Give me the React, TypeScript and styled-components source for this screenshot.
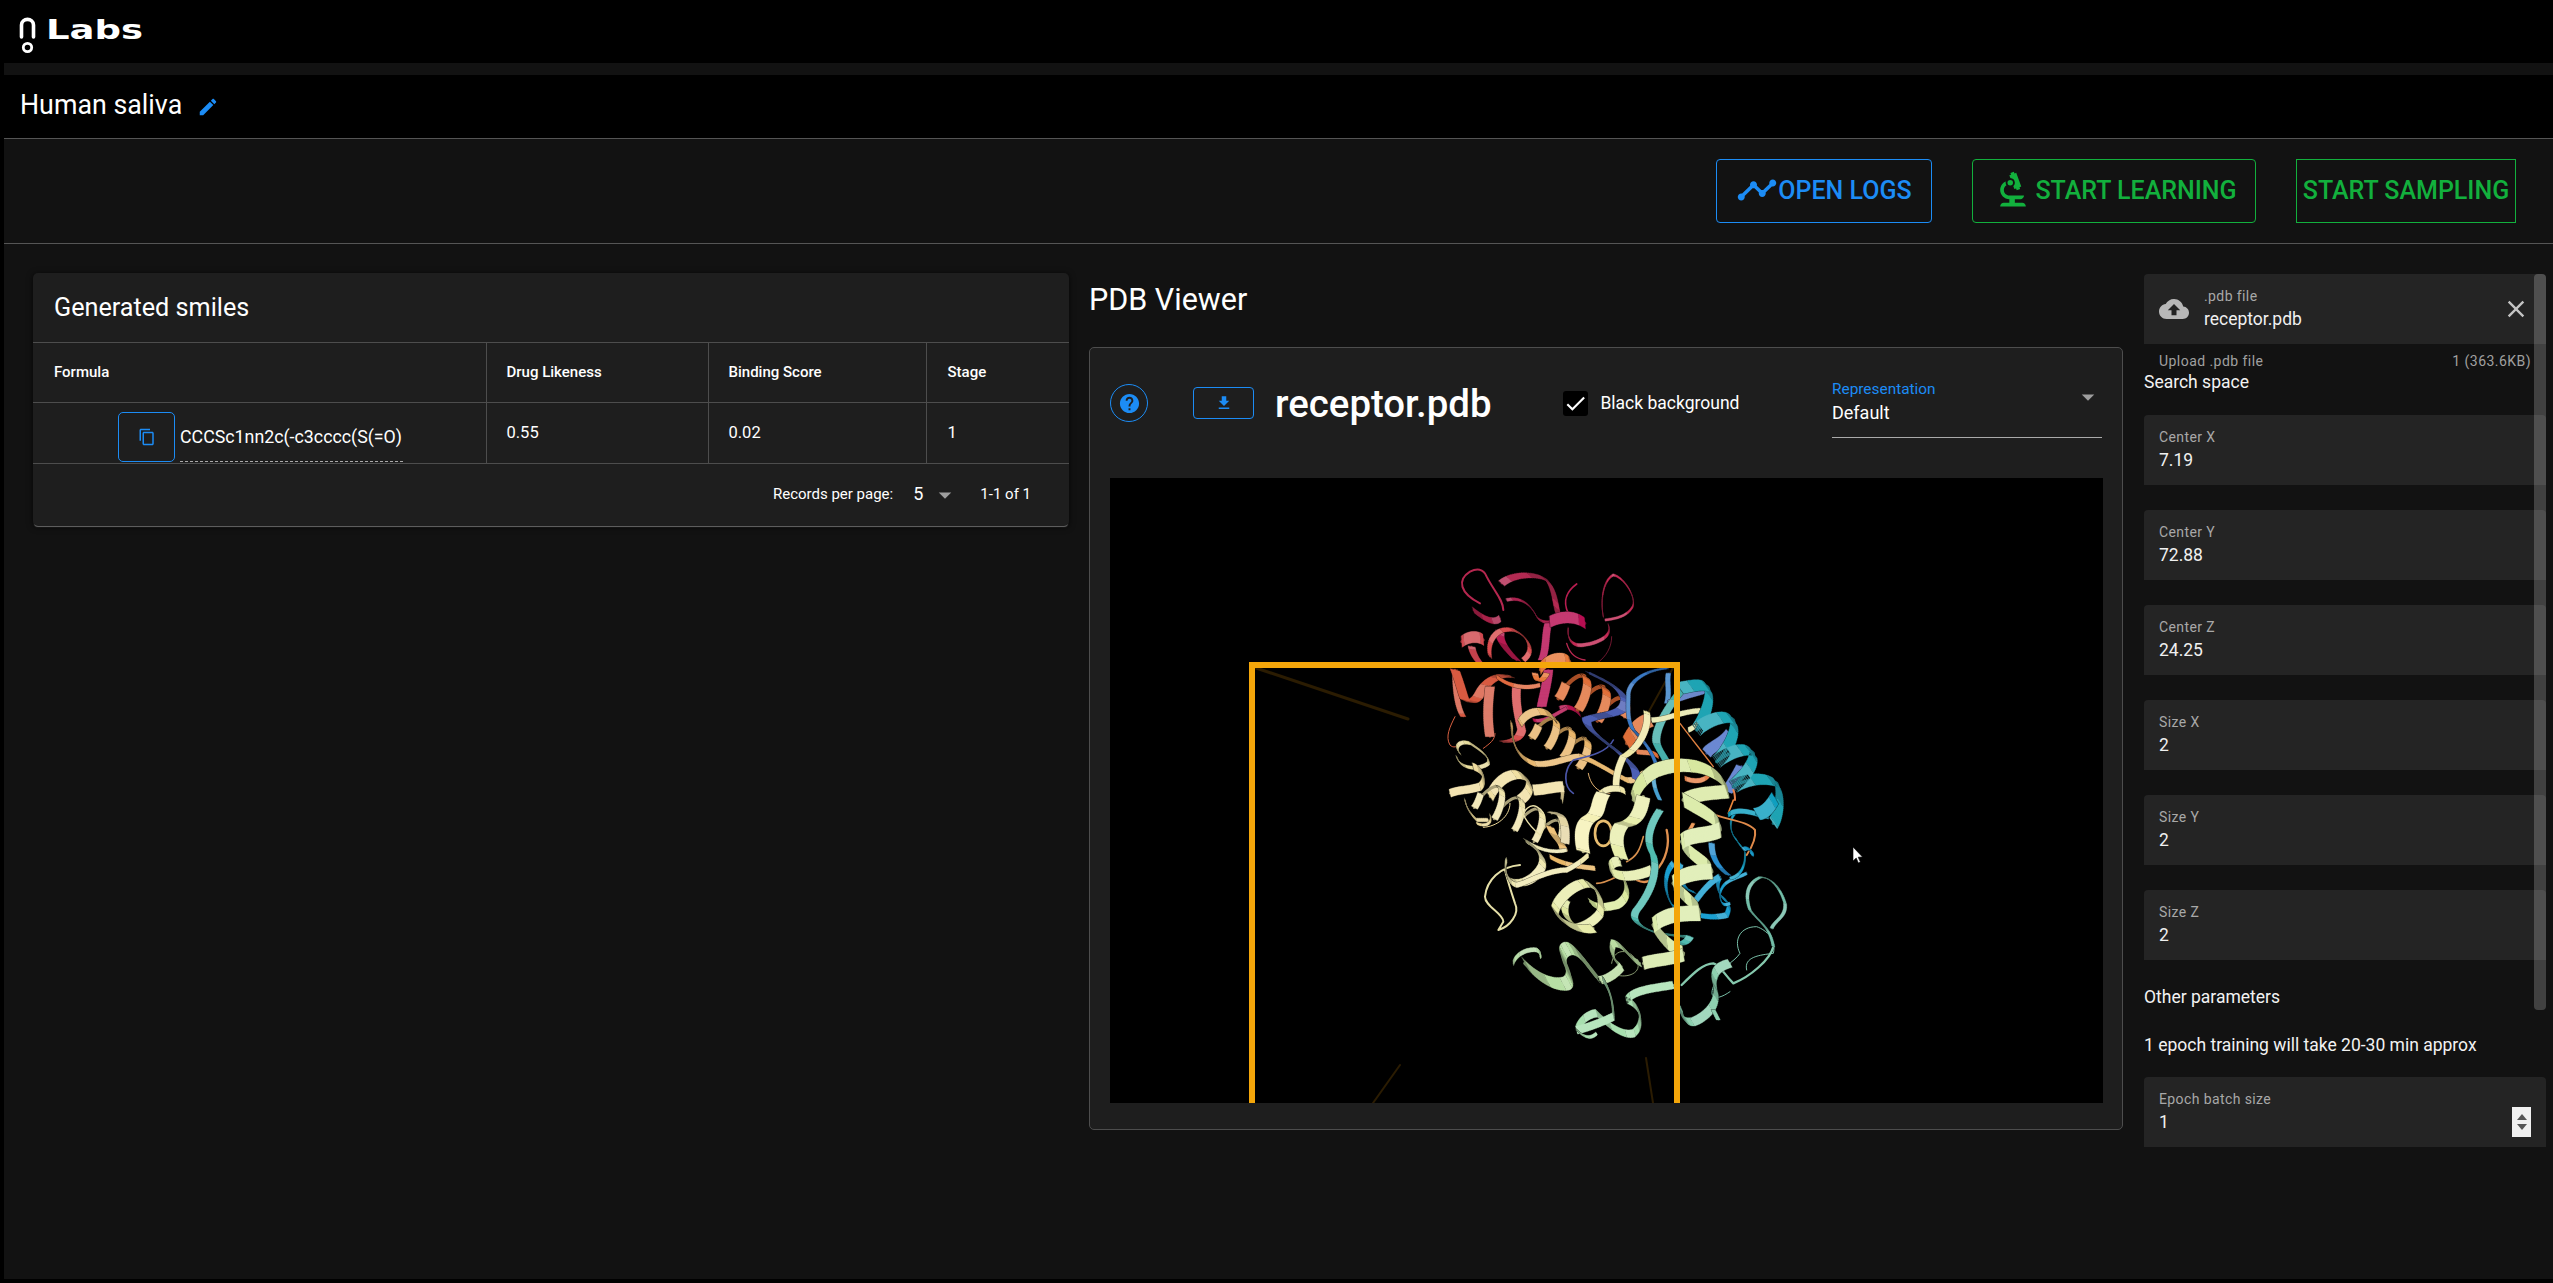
import React from "react";
import styled, { createGlobalStyle } from "styled-components";

const Global = createGlobalStyle`
  html, body { margin: 0; padding: 0; background: #000; }
  body { font-family: Roboto, "Liberation Sans", sans-serif; color: #fff; overflow: hidden; }
  * { box-sizing: border-box; }
`;

const BLUE = "#1c8cf5";
const GREEN = "#12b03d";
const LINE = "#4d4d4d";

const Page = styled.div`
  width: 2553px; height: 1283px; background: #000;
  display: flex; flex-direction: column;
`;
const TopBar = styled.header`
  height: 63px; flex: none; display: flex; align-items: flex-start; padding: 17px 0 0 18px; gap: 0;
`;
const LogoText = styled.span`
  display: inline-block; width: 92px; margin: 0 0 0 2px;
  font-family: "DejaVu Sans", sans-serif; font-size: 27px; line-height: 26px; font-weight: 700;
  transform: scaleX(1.37); transform-origin: left center; color: #fff;
`;
const Main = styled.main`
  flex: 1; margin: 0 0 4px 4px; background: #121212; display: flex; flex-direction: column; min-height: 0;
  padding-top: 12px;
`;
const TitleBar = styled.div`
  height: 64px; flex: none; background: #000; border-bottom: 1px solid #555;
  display: flex; align-items: center; padding: 0 0 4px 16px;
`;
const Title = styled.h1`
  margin: 0; font-size: 26.8px; line-height: 32px; font-weight: 400;
`;
const EditIcon = styled.svg`
  width: 22px; height: 22px; margin: 5px 0 0 15px; fill: ${BLUE};
`;
const Toolbar = styled.div`
  height: 105px; flex: none; border-bottom: 1px solid #555; display: flex; align-items: center;
  justify-content: flex-end; gap: 40px; padding: 0 37px 0 0;
`;
const ActionButton = styled.div<{ $color: string; $width: number; $radius: number }>`
  width: ${(p) => p.$width}px; height: 64px; display: flex; align-items: center; justify-content: center;
  border: 1px solid ${(p) => p.$color}; border-radius: ${(p) => p.$radius}px; color: ${(p) => p.$color};
  font-size: 25px; font-weight: 500; white-space: nowrap; padding-bottom: 2px;
`;
const ButtonIcon = styled.svg<{ $size: number }>`
  width: ${(p) => p.$size}px; height: ${(p) => p.$size}px; fill: currentColor; flex: none;
`;
const Columns = styled.div`
  flex: 1; display: flex; align-items: flex-start; padding: 29px 0 0 29px; min-height: 0;
`;
const TableCard = styled.section`
  width: 1036px; flex: none; background: #1e1e1e; border-radius: 5px;
  box-shadow: 0 2px 1px -1px #666, 0 1px 6px rgba(0,0,0,.7);
`;
const CardTitle = styled.h2`
  margin: 0; height: 70px; padding: 0 21px 0 21px; display: flex; align-items: center;
  font-size: 25.2px; font-weight: 400; border-bottom: 1px solid ${LINE};
`;
const Table = styled.table`
  width: 100%; border-collapse: collapse; table-layout: fixed;
`;
const Th = styled.th<{ $w: number }>`
  width: ${(p) => p.$w}px; height: 59px; padding: 0 0 0 20px; text-align: left; font-size: 15px; font-weight: 500;
  border-left: 1px solid ${LINE}; border-bottom: 1px solid ${LINE};
  &:first-child { border-left: 0; padding-left: 21px; }
  &:last-child { padding-left: 21px; }
`;
const Td = styled.td`
  height: 61px; padding: 0 0 0 20px; font-size: 16.5px; border-left: 1px solid ${LINE}; border-bottom: 1px solid ${LINE};
  &:first-child { border-left: 0; padding: 0 0 0 85px; }
  &:last-child { padding-left: 21px; }
`;
const FormulaCell = styled.div`
  display: flex; align-items: flex-end; height: 50px; margin-top: 9px; gap: 5px;
`;
const CopyButton = styled.div`
  width: 57px; height: 50px; flex: none; border: 1px solid ${BLUE}; border-radius: 5px;
  display: flex; align-items: center; justify-content: center;
`;
const CopyIcon = styled.svg`
  width: 18px; height: 18px; fill: ${BLUE};
`;
const Formula = styled.span`
  font-size: 17.8px; line-height: 50px; height: 50px; width: 223px; white-space: nowrap; border-bottom: 1px dashed #aaa; display: block;
`;
const Footer = styled.div`
  height: 62px; display: flex; align-items: center; justify-content: flex-end; padding: 0 38px 2px 0; font-size: 15px;
`;
const PerPage = styled.span`
  font-size: 18px; margin: 0 0 0 20px;
`;
const Caret = styled.svg<{ $m: string }>`
  width: 30px; height: 30px; fill: #9e9e9e; margin: ${(p) => p.$m}; flex: none;
`;
const Range = styled.span`
  margin-left: 20px;
`;
const ViewerColumn = styled.section`
  width: 1034px; flex: none; margin-left: 20px;
`;
const ViewerHeading = styled.h2`
  margin: 0; height: 74px; padding: 12px 0 0 0; font-size: 30.5px; line-height: 30px; font-weight: 400;
`;
const ViewerCard = styled.div`
  height: 783px; background: #1e1e1e; border: 1px solid ${LINE}; border-radius: 5px; padding: 0 20px;
`;
const ViewerControls = styled.div`
  height: 130px; display: flex; align-items: center; padding-bottom: 20px;
`;
const HelpRing = styled.div`
  width: 38px; height: 38px; flex: none; border: 1px solid ${BLUE}; border-radius: 50%;
  display: flex; align-items: center; justify-content: center;
`;
const HelpIcon = styled.svg`
  width: 23px; height: 23px; fill: ${BLUE};
`;
const DownloadButton = styled.div`
  width: 61px; height: 32px; flex: none; margin-left: 45px; border: 1px solid ${BLUE}; border-radius: 4px;
  display: flex; align-items: center; justify-content: center;
`;
const DownloadIcon = styled.svg`
  width: 18px; height: 18px; fill: ${BLUE};
`;
const FileName = styled.div`
  width: 289px; margin-left: 21px; font-size: 38.4px; font-weight: 500; white-space: nowrap;
`;
const CheckBox = styled.div`
  width: 25px; height: 25px; flex: none; background: #000; border-radius: 3px; display: flex; align-items: center; justify-content: center;
`;
const CheckIcon = styled.svg`
  width: 25px; height: 25px; fill: #fff;
`;
const CheckLabel = styled.span`
  width: 232px; margin-left: 12px; font-size: 17.5px; white-space: nowrap;
`;
const SelectBox = styled.div`
  width: 270px; height: 58px; flex: none; border-bottom: 1px solid #aaa; position: relative; margin-top: 12px;
`;
const SelectLabel = styled.div`
  font-size: 15.4px; line-height: 18px; color: ${BLUE};
`;
const SelectValue = styled.div`
  font-size: 18px; line-height: 24px; margin-top: 3px;
`;
const SelectCaret = styled(Caret)`
  position: absolute; right: -1px; top: 2px;
`;
const Viewer = styled.div`
  width: 993px; height: 625px; background: #000; overflow: hidden;
`;
const ViewerArt = styled.svg`
  display: block; width: 993px; height: 625px;
`;
const Side = styled.aside`
  width: 402px; height: 874px; flex: none; margin: 1px 0 0 21px; position: relative; overflow: hidden;
`;
const ScrollThumb = styled.div`
  position: absolute; right: 0; top: 0; width: 12px; height: 736px; background: rgba(255,255,255,.2); border-radius: 4px;
`;
const Field = styled.div<{ $mb?: number }>`
  height: 70px; background: #242424; border-radius: 4px 4px 0 0; padding: 13px 15px 0; position: relative;
  margin-bottom: ${(p) => p.$mb ?? 25}px; display: flex; align-items: flex-start;
`;
const FieldText = styled.div`
  flex: 1;
`;
const FieldLabel = styled.div`
  font-size: 14px; line-height: 18px; letter-spacing: .4px; color: #a8a8a8;
`;
const FieldValue = styled.div`
  font-size: 17.5px; line-height: 24px; margin-top: 2px; color: #f0f0f0;
`;
const UploadIcon = styled.svg`
  width: 30px; height: 30px; fill: #b8b8b8; margin: 7px 15px 0 0; flex: none;
`;
const CloseIcon = styled.svg`
  width: 28px; height: 28px; fill: #c4c4c4; position: absolute; right: 16px; top: 21px;
`;
const Helper = styled.div`
  height: 26px; padding: 8px 15px 0; display: flex; justify-content: space-between;
  font-size: 14px; line-height: 18px; letter-spacing: .45px; color: #a0a0a0;
`;
const SectionText = styled.div<{ $mb: number; $mt?: number }>`
  font-size: 17.5px; line-height: 24px; margin: ${(p) => p.$mt ?? 0}px 0 ${(p) => p.$mb}px; color: #f2f2f2;
`;
const Spinner = styled.div`
  position: absolute; right: 15px; top: 30px; width: 19px; height: 30px; background: #f0f0f0;
  display: flex; flex-direction: column; align-items: center; justify-content: center; gap: 4px;
`;
const SpinArrow = styled.div<{ $up?: boolean }>`
  width: 0; height: 0; border-left: 5px solid transparent; border-right: 5px solid transparent;
  ${(p) => (p.$up ? "border-bottom: 6px solid #555;" : "border-top: 6px solid #555;")}
`;

/* d, ribbon width, colour, optional nib angle in degrees */
type R = [string, number, string, number?];
type P = [number, number];

/* coordinates: crop of x 1440, y 560 at 3x */
const upper: R[] = [
  ["M120 130C60 100 50 60 90 35C110 25 130 25 140 50C160 90 190 120 190 150", 6, "#b5274f"],
  ["M100 150C125 170 160 195 180 175", 20, "#a92249", 70],
  ["M200 120C240 110 270 130 290 170C300 185 320 190 340 185", 10, "#ad2450", 60],
  ["M185 70C220 40 290 40 320 60C345 90 345 130 355 165", 24, "#b32a52", 40],
  ["M410 72C385 90 365 120 385 160", 5, "#b81d50"],
  ["M490 170C480 120 490 60 520 45C550 50 590 110 578 140C560 170 530 175 495 180", 7, "#c22a55", 80],
  ["M505 195C520 230 470 250 430 255C400 260 380 240 385 205", 10, "#c22a55", 80],
  ["M515 230C515 260 500 290 470 310", 2, "#a82247"],
  ["M380 250C390 285 410 295 435 300", 4, "#b82850"],
  ["M325 190C315 220 320 270 305 300", 22, "#b80f52", 0],
  ["M325 330C320 380 310 410 305 440", 28, "#b80f52", 0],
  ["M330 185C370 165 410 170 435 190", 34, "#b80f52", 85],
  ["M360 445C390 435 410 450 420 465", 14, "#b5134e", 70],
  ["M280 480C310 490 350 460 380 445", 10, "#b5134e", 70],
  ["M95 260C100 290 120 310 130 320", 22, "#c4424e", 10],
  ["M65 245C90 225 120 230 130 240", 34, "#d04a50", 85],
  ["M180 215C175 240 200 270 230 300", 28, "#b81a50", 20],
  ["M150 290C140 240 170 200 220 210C260 225 290 270 250 300", 16, "#d94e4f", 45],
  ["M45 330C45 380 50 440 70 470", 16, "#d55a44", 0],
  ["M45 470C30 500 15 530 30 555C40 565 50 560 60 555", 3, "#d96040"],
  ["M165 520C165 540 150 550 130 565", 3, "#d96040"],
  ["M45 330C60 370 70 410 75 420C95 430 110 420 120 400C140 360 180 340 210 350", 30, "#d85a42", 15],
  ["M150 380C145 420 140 470 150 530", 28, "#d5604a", 0],
  ["M230 380C225 420 235 470 245 510C240 535 220 545 190 545", 26, "#d9504f", 10],
  ["M170 350C200 375 250 390 300 375", 12, "#e06a40", 80],
  ["M300 330C310 300 370 280 390 305", 30, "#e87a3c", 80],
  ["M285 340C290 365 300 375 320 340", 18, "#e87a3c", 10],
  ["M215 490C215 550 230 590 280 610C330 620 380 590 420 590C460 600 500 630 560 660C580 665 600 650 610 640", 18, "#e9b972", 70],
  ["M240 490C260 450 320 440 345 480", 24, "#e9b972", 60],
  ["M445 640C450 670 470 700 510 700", 3, "#e0b070"],
  ["M520 540C500 580 440 590 400 600C370 630 370 680 400 700", 5, "#4a55a8"],
  ["M450 340C490 360 540 380 555 420C560 470 480 460 440 480C440 510 490 540 540 580C570 610 590 620 590 660", 30, "#4e60b5", 25],
  ["M560 550C580 510 600 490 630 480", 44, "#e0703a", 60],
  ["M590 575C620 580 640 575 655 590", 14, "#e0703a", 80],
  ["M680 325C620 330 570 360 565 400C565 440 560 480 580 510C610 540 640 580 650 620", 12, "#3a78c4", 15],
  ["M685 340C680 370 690 400 680 430", 14, "#3a80c8", 0],
  ["M685 430C720 410 770 400 800 390", 18, "#4a6ec0", 80],
  ["M870 520C850 550 810 560 800 580", 34, "#4a6ec8", 45],
  ["M905 620C890 650 870 680 860 695", 34, "#4a6ec8", 20],
  ["M720 490C750 530 790 580 820 620", 4, "#e08040"],
  ["M730 385C690 430 640 510 650 550C665 590 690 600 680 640", 24, "#47b0aa", 10],
  ["M620 455C630 510 590 570 550 590C530 630 525 670 530 690", 20, "#efe8a8", 20],
  ["M635 480C680 480 730 450 795 452C800 470 770 500 745 510", 15, "#e6e6a8", 80],
  ["M735 655C770 670 800 660 810 640", 14, "#e8824a", 85],
  ["M880 690C885 700 885 710 885 720", 6, "#e8824a"],
  ["M720 385C760 375 800 370 805 385C815 420 790 480 770 510C800 480 860 460 880 480C895 520 850 590 830 605C860 580 920 555 940 580C945 620 900 660 880 680C920 655 980 650 1010 670C1025 700 1020 760 1000 790", 40, "#20a4b4", 55],
  ["M60 580C40 560 60 540 90 550C120 570 150 590 145 610C120 630 60 630 50 590", 12, "#e8dc9c", 60],
  ["M100 620C130 630 140 660 120 680C90 690 50 690 30 700", 24, "#f0dda0", 75],
  ["M150 710C170 660 220 630 250 650C280 670 270 700 240 720", 32, "#f0dfa2", 55],
  ["M280 690C310 690 340 680 370 680L365 715", 32, "#f0dfa2", 80],
  ["M470 715C490 680 540 680 555 695", 18, "#eee6a8", 80],
  ["M640 640C640 680 650 700 660 720", 12, "#47a0d0", 10],
  ["M650 625C680 615 720 605 745 610", 8, "#e6e6a8", 80],
  ["M580 720C590 680 610 650 650 630C680 620 710 610 770 620C820 630 860 665 860 695C810 700 770 700 735 720", 42, "#d8e8a0", 70],
];

/* coordinates: crop of x 1440, y 800 at 3x */
const lower: R[] = [
  ["M75 0C80 30 100 50 110 60L145 60", 12, "#ecd898", 70],
  ["M150 45C160 75 130 80 110 70", 8, "#ecd898", 70],
  ["M210 10C210 50 170 80 130 82", 3, "#ecd898"],
  ["M245 0C240 40 260 70 300 105C320 80 325 40 290 20C270 10 250 30 245 60", 4, "#e8dfa8"],
  ["M330 80C345 120 370 130 370 150", 26, "#eec37a", 20],
  ["M335 40C370 30 380 80 375 130", 26, "#e5d7a5", 15],
  ["M260 125C300 150 340 160 380 150", 10, "#eee8b5", 80],
  ["M240 195C180 200 140 240 135 290C135 320 190 340 190 365L175 390C210 380 240 340 225 310C215 280 205 250 195 210", 6, "#e6e0a8"],
  ["M330 170C370 195 420 200 465 205", 14, "#eab868", 80],
  ["M260 125C300 150 320 180 300 210C280 240 240 260 215 240", 28, "#efe8b0", 45],
  ["M200 180C190 200 200 250 230 255C260 250 320 210 380 210C410 195 430 180 445 165", 15, "#efe8b0", 80],
  ["M610 110C600 150 590 170 560 185", 5, "#d8904e"],
  ["M530 230C500 245 480 250 470 250", 5, "#d8904e"],
  ["M590 240C610 250 640 250 645 215C680 180 690 130 680 90", 7, "#e0904f"],
  ["M465 100C465 50 515 50 515 100C515 150 465 150 465 100", 8, "#e8bd70"],
  ["M430 155C420 110 425 70 450 55C480 40 470 10 490 -20", 42, "#f5f0b5", 15],
  ["M545 175C525 130 525 100 545 75C580 70 600 50 610 -10", 42, "#e8eead", 15],
  ["M550 235C570 270 560 300 530 315C500 320 480 330 450 305", 26, "#dcec9f", 60],
  ["M540 185C520 180 505 200 515 215C540 235 590 230 635 210", 30, "#e4ecaa", 70],
  ["M430 250C470 250 490 300 480 340C460 370 410 390 400 380", 28, "#e8ecaa", 50],
  ["M380 300C365 330 380 370 420 380", 24, "#dfe8a0", 30],
  ["M440 250C400 250 350 300 345 330C360 370 420 395 460 385", 32, "#e8ecaa", 50],
  ["M660 30C620 90 620 130 640 165C655 220 630 280 590 330C570 360 600 380 640 395C680 405 730 410 750 410C740 430 720 435 700 430", 22, "#50bcb0", 20],
  ["M815 130C815 180 840 205 865 225", 18, "#2b8fd0", 10],
  ["M700 190C670 220 670 280 700 320C740 340 810 360 860 345C870 320 870 310 850 295C830 280 830 240 840 230C800 250 770 300 760 310", 18, "#1a9fd0", 60],
  ["M720 190C710 230 730 270 760 275", 22, "#1a9fd0", 30],
  ["M920 220C880 240 850 240 840 280C840 310 850 320 870 310", 9, "#1aa0d0", 70],
  ["M885 40C865 60 870 100 890 120C900 140 920 150 915 170C915 200 900 230 870 235", 9, "#1ca4c8", 70],
  ["M800 35C850 60 920 60 945 90C950 120 930 150 920 165", 6, "#e08a4a"],
  ["M760 70C750 90 740 100 735 130", 10, "#e8853a", 10],
  ["M880 0C875 15 870 25 865 40", 5, "#e8853a"],
  ["M985 50L950 42C910 30 880 30 865 45", 14, "#0f9fc0", 85],
  ["M1005 -5C990 20 975 40 950 42", 40, "#0f9fc0", 60],
  ["M910 148C925 140 940 150 935 165", 14, "#1c9ccb", 45],
  ["M730 0C800 40 840 60 840 90C800 110 750 100 725 125C750 170 810 190 815 215C770 215 720 225 700 250C730 290 780 320 778 340C730 340 680 340 640 375C660 410 700 450 730 460", 46, "#dcecac", 82],
  ["M220 490C225 465 260 445 290 450C300 455 305 465 300 470", 13, "#b7dca8", 80],
  ["M515 490C520 450 560 440 590 480C610 520 560 535 530 525", 3, "#889a70"],
  ["M255 490C290 530 340 560 380 550C410 530 350 470 375 450C400 430 430 480 470 530", 44, "#b8e0a5", 62],
  ["M480 540C500 540 530 520 545 500C520 480 510 460 520 430C550 430 570 480 600 490", 26, "#bbdda2", 60],
  ["M610 490C640 480 680 480 730 465", 38, "#d4e8a5", 80],
  ["M490 540C510 570 520 610 520 650C480 670 420 690 410 690C420 660 450 640 470 640C490 660 540 710 580 700C610 680 610 620 560 600C580 570 640 565 700 555", 24, "#a9e0b0", 75],
  ["M410 690C430 710 450 720 470 700", 10, "#a9e0b0", 60],
  ["M920 510C910 470 960 465 1000 460C1010 420 980 390 950 380C900 380 880 420 900 460C880 490 840 500 830 540C800 590 820 610 870 575", 3, "#78c0a8"],
  ["M725 555C760 520 790 490 820 490C840 495 850 520 880 550C930 530 990 480 1000 440", 7, "#85c8ad"],
  ["M995 385C1005 360 1040 350 1035 310C1020 260 990 230 960 232C920 250 915 290 930 330C960 370 990 380 1000 440", 10, "#72bda8", 20],
  ["M720 620C725 650 735 670 760 665C800 650 840 610 825 560C815 520 830 500 870 490", 28, "#8ed0b0", 60],
  ["M820 630L835 660", 12, "#8ed0b0", 0],
];

function samplePath(d: string): P[] {
  const tokens = d.match(/[MCL]|-?[\d.]+/g) || [];
  const out: P[] = [];
  let i = 0, cmd = "", cur: P = [0, 0];
  const num = () => parseFloat(tokens[i++]);
  while (i < tokens.length) {
    if (/[MCL]/.test(tokens[i])) cmd = tokens[i++];
    if (cmd === "M") { cur = [num(), num()]; out.push(cur); cmd = "L"; }
    else if (cmd === "L") {
      const next: P = [num(), num()];
      for (let s = 1; s <= 6; s++) out.push([cur[0] + ((next[0] - cur[0]) * s) / 6, cur[1] + ((next[1] - cur[1]) * s) / 6]);
      cur = next;
    } else {
      const a: P = [num(), num()], b: P = [num(), num()], c: P = [num(), num()];
      for (let s = 1; s <= 22; s++) {
        const t = s / 22, u = 1 - t;
        out.push([
          u * u * u * cur[0] + 3 * u * u * t * a[0] + 3 * u * t * t * b[0] + t * t * t * c[0],
          u * u * u * cur[1] + 3 * u * u * t * a[1] + 3 * u * t * t * b[1] + t * t * t * c[1],
        ]);
      }
      cur = c;
    }
  }
  return out;
}

function shade(hex: string, f: number) {
  const n = parseInt(hex.slice(1), 16);
  const ch = (v: number) => Math.round(f <= 1 ? v * f : v + (255 - v) * (f - 1));
  return `rgb(${ch(n >> 16)},${ch((n >> 8) & 255)},${ch(n & 255)})`;
}

const TONES = [0.62, 0.82, 1, 1.18];

/* a flat ribbon: a wide nib drawn along the curve, wide when it crosses the curve, thin when it follows it */
function Band({ pts, w, color, angle }: { pts: P[]; w: number; color: string; angle: number }) {
  const rad = (angle * Math.PI) / 180;
  const nx = (Math.cos(rad) * w) / 2, ny = (Math.sin(rad) * w) / 2;
  const quads = ["", "", "", ""];
  for (let i = 1; i < pts.length; i++) {
    const [x0, y0] = pts[i - 1], [x1, y1] = pts[i];
    const len = Math.hypot(x1 - x0, y1 - y0) || 1;
    const ratio = Math.abs(((x1 - x0) * Math.sin(rad) - (y1 - y0) * Math.cos(rad)) / len);
    const bucket = ratio < 0.3 ? 0 : ratio < 0.62 ? 1 : ratio < 0.9 ? 2 : 3;
    quads[bucket] += `M${(x0 + nx).toFixed(1)} ${(y0 + ny).toFixed(1)}L${(x1 + nx).toFixed(1)} ${(y1 + ny).toFixed(1)}L${(x1 - nx).toFixed(1)} ${(y1 - ny).toFixed(1)}L${(x0 - nx).toFixed(1)} ${(y0 - ny).toFixed(1)}Z`;
  }
  const spine = pts.map(([x, y], i) => `${i ? "L" : "M"}${x.toFixed(1)} ${y.toFixed(1)}`).join("");
  const thin = Math.max(3, w * 0.24);
  return (
    <g strokeLinejoin="round" strokeLinecap="round">
      <path d={quads.join("")} fill="#000" fillOpacity={0.5} stroke="#000" strokeOpacity={0.5} strokeWidth={3} />
      <path d={spine} fill="none" stroke={shade(color, 0.62)} strokeWidth={thin} />
      {quads.map((q, i) => (q ? <path key={i} d={q} fill={shade(color, TONES[i])} stroke={shade(color, TONES[i])} strokeWidth={0.8} /> : null))}
    </g>
  );
}

function helix(x1: number, y1: number, x2: number, y2: number, n: number, r: number, w: number, color: string, back: string) {
  const len = Math.hypot(x2 - x1, y2 - y1);
  const ux = (x2 - x1) / len, uy = (y2 - y1) / len;
  const angle = (Math.atan2(uy, ux) * 180) / Math.PI;
  const runs: P[][] = [];
  const backs: P[][] = [];
  let run: P[] = [], side = true;
  for (let i = 0; i <= 160; i++) {
    const t = i / 160, a = t * n * Math.PI * 2;
    const along = t * len + Math.cos(a) * r * 0.3;
    const off = Math.sin(a) * r;
    const p: P = [x1 + ux * along - uy * off, y1 + uy * along + ux * off];
    const front = Math.cos(a) > 0;
    if (front !== side && run.length) { (side ? runs : backs).push(run); run = [run[run.length - 1]]; side = front; }
    run.push(p);
  }
  (side ? runs : backs).push(run);
  return (
    <g>
      {backs.map((pts, i) => (
        <path key={i} d={pts.map(([x, y], k) => `${k ? "L" : "M"}${x.toFixed(1)} ${y.toFixed(1)}`).join("")} fill="none" stroke={back} strokeWidth={w * 0.45} strokeLinecap="round" />
      ))}
      {runs.map((pts, i) => <Band key={i} pts={pts} w={w} color={color} angle={angle} />)}
    </g>
  );
}

function ribbons(list: R[]) {
  return list.map(([d, w, c, angle], i) =>
    angle === undefined ? (
      <path key={i} d={d} fill="none" stroke={c} strokeWidth={w} strokeLinecap="round" strokeLinejoin="round" />
    ) : (
      <Band key={i} pts={samplePath(d)} w={w} color={c} angle={angle} />
    ),
  );
}

function Protein() {
  return (
    <ViewerArt viewBox="1110 478 993 625">
      <g stroke="#2b1c02" strokeLinecap="round" fill="none">
        <path d="M1256 668L1408 719" strokeWidth="3" />
        <path d="M1673 668L1648 713" strokeWidth="2" />
        <path d="M1400 1065L1373 1103" strokeWidth="2" />
        <path d="M1646 1058L1653 1103" strokeWidth="2" />
      </g>
      <g transform="translate(1440 560) scale(.33333)">
        {ribbons(upper.slice(0, 27))}
        {helix(365, 365, 540, 465, 3, 48, 28, "#e0703a", "#a84e26")}
        {helix(285, 490, 450, 595, 3.5, 42, 24, "#e8b56c", "#a8814a")}
        {ribbons(upper.slice(27))}
      </g>
      <g transform="translate(1440 800) scale(.33333)">
        {helix(110, -25, 350, 110, 4, 45, 20, "#efe4ac", "#a9a078")}
        {ribbons(lower)}
      </g>
      <g fill="none" stroke="#f4a60a" strokeWidth="6">
        <path d="M1252 1110V665H1677V1110" />
      </g>
      <path d="M1853 847v14l3.2-3 2.2 5 2-.9-2.2-4.9 4.3-.2z" fill="#fff" stroke="#000" strokeWidth=".6" />
    </ViewerArt>
  );
}

const LogoMark = styled.svg`
  width: 26px; height: 40px; flex: none; fill: none; stroke: #fff;
`;

const fields = [
  ["Center X", "7.19"],
  ["Center Y", "72.88"],
  ["Center Z", "24.25"],
  ["Size X", "2"],
  ["Size Y", "2"],
  ["Size Z", "2"],
];

export default function App() {
  return (
    <Page>
      <Global />
      <TopBar>
        <LogoMark viewBox="0 0 26 40">
          <path d="M3.5 20V8C3.5 0.5 15.5 0.5 15.5 8V20" strokeWidth="3.6" strokeLinecap="round" />
          <circle cx="9.5" cy="30.5" r="4.2" strokeWidth="2.8" />
        </LogoMark>
        <LogoText>Labs</LogoText>
      </TopBar>
      <Main>
        <TitleBar>
          <Title>Human saliva</Title>
          <EditIcon viewBox="0 0 24 24"><path d="M3 17.25V21h3.75L17.81 9.94l-3.75-3.75L3 17.25zM20.71 7.04c.39-.39.39-1.02 0-1.41l-2.34-2.34c-.39-.39-1.02-.39-1.41 0l-1.83 1.83 3.75 3.75 1.83-1.83z" /></EditIcon>
        </TitleBar>
        <Toolbar>
          <ActionButton $color={BLUE} $width={216} $radius={4}>
            <ButtonIcon $size={42} viewBox="0 0 24 24"><path d="M23 8c0 1.1-.9 2-2 2-.18 0-.35-.02-.51-.07l-3.56 3.55c.05.16.07.34.07.52 0 1.1-.9 2-2 2s-2-.9-2-2c0-.18.02-.36.07-.52l-2.55-2.55c-.16.05-.34.07-.52.07s-.36-.02-.52-.07l-4.55 4.56c.05.16.07.33.07.51 0 1.1-.9 2-2 2s-2-.9-2-2 .9-2 2-2c.18 0 .35.02.51.07l4.56-4.55C8.02 9.36 8 9.18 8 9c0-1.1.9-2 2-2s2 .9 2 2c0 .18-.02.36-.07.52l2.55 2.55c.16-.05.34-.07.52-.07s.36.02.52.07l3.55-3.56C19.02 8.35 19 8.18 19 8c0-1.1.9-2 2-2s2 .9 2 2z" /></ButtonIcon>
            OPEN LOGS
          </ActionButton>
          <ActionButton $color={GREEN} $width={284} $radius={4}>
            <ButtonIcon $size={44} viewBox="0 0 24 24">
              <path d="M7 19c-1.1 0-2 .9-2 2h14c0-1.1-.9-2-2-2h-4v-2h3c1.1 0 2-.9 2-2h-8c-1.66 0-3-1.34-3-3 0-1.09.59-2.04 1.46-2.56C8.17 9.03 8 8.54 8 8c0-.21.04-.42.09-.62C6.28 8.13 5 9.92 5 12c0 2.76 2.24 5 5 5v2H7z" />
              <path d="M10.56 5.51C11.91 5.54 13 6.64 13 8c0 .75-.33 1.41-.85 1.87l.59 1.62.94-.34.34.94 1.88-.68-.34-.94.94-.34-2.74-7.52-.94.34-.34-.94-1.88.68.34.94-.94.35.56 1.53z" />
              <circle cx="10.5" cy="8" r="1.5" />
            </ButtonIcon>
            START LEARNING
          </ActionButton>
          <ActionButton $color={GREEN} $width={220} $radius={0}>START SAMPLING</ActionButton>
        </Toolbar>
        <Columns>
          <TableCard>
            <CardTitle>Generated smiles</CardTitle>
            <Table>
              <thead>
                <tr>
                  <Th $w={453}>Formula</Th>
                  <Th $w={222}>Drug Likeness</Th>
                  <Th $w={218}>Binding Score</Th>
                  <Th $w={143}>Stage</Th>
                </tr>
              </thead>
              <tbody>
                <tr>
                  <Td>
                    <FormulaCell>
                      <CopyButton>
                        <CopyIcon viewBox="0 0 24 24"><path d="M16 1H4c-1.1 0-2 .9-2 2v14h2V3h12V1zm3 4H8c-1.1 0-2 .9-2 2v14c0 1.1.9 2 2 2h11c1.1 0 2-.9 2-2V7c0-1.1-.9-2-2-2zm0 16H8V7h11v14z" /></CopyIcon>
                      </CopyButton>
                      <Formula>CCCSc1nn2c(-c3cccc(S(=O)</Formula>
                    </FormulaCell>
                  </Td>
                  <Td>0.55</Td>
                  <Td>0.02</Td>
                  <Td>1</Td>
                </tr>
              </tbody>
            </Table>
            <Footer>
              Records per page:
              <PerPage>5</PerPage>
              <Caret $m="2px 0 0 7px" viewBox="0 0 24 24"><path d="M7 10l5 5 5-5z" /></Caret>
              <Range>1-1 of 1</Range>
            </Footer>
          </TableCard>
          <ViewerColumn>
            <ViewerHeading>PDB Viewer</ViewerHeading>
            <ViewerCard>
              <ViewerControls>
                <HelpRing>
                  <HelpIcon viewBox="0 0 24 24"><path d="M12 2C6.48 2 2 6.48 2 12s4.48 10 10 10 10-4.48 10-10S17.52 2 12 2zm1 17h-2v-2h2v2zm2.07-7.75l-.9.92C13.45 12.9 13 13.5 13 15h-2v-.5c0-1.1.45-2.1 1.17-2.83l1.24-1.26c.37-.36.59-.86.59-1.41 0-1.1-.9-2-2-2s-2 .9-2 2H8c0-2.21 1.79-4 4-4s4 1.79 4 4c0 .88-.36 1.68-.93 2.25z" /></HelpIcon>
                </HelpRing>
                <DownloadButton>
                  <DownloadIcon viewBox="0 0 24 24"><path d="M5 20h14v-2H5v2zM19 9h-4V3H9v6H5l7 7 7-7z" /></DownloadIcon>
                </DownloadButton>
                <FileName>receptor.pdb</FileName>
                <CheckBox>
                  <CheckIcon viewBox="0 0 24 24"><path d="M9 16.17L4.83 12l-1.42 1.41L9 19 21 7l-1.41-1.41z" /></CheckIcon>
                </CheckBox>
                <CheckLabel>Black background</CheckLabel>
                <SelectBox>
                  <SelectLabel>Representation</SelectLabel>
                  <SelectValue>Default</SelectValue>
                  <SelectCaret $m="0" viewBox="0 0 24 24"><path d="M7 10l5 5 5-5z" /></SelectCaret>
                </SelectBox>
              </ViewerControls>
              <Viewer><Protein /></Viewer>
            </ViewerCard>
          </ViewerColumn>
          <Side>
            <Field $mb={0}>
              <UploadIcon viewBox="0 0 24 24"><path d="M19.35 10.04C18.67 6.59 15.64 4 12 4 9.11 4 6.6 5.64 5.35 8.04 2.34 8.36 0 10.91 0 14c0 3.31 2.69 6 6 6h13c2.76 0 5-2.24 5-5 0-2.64-2.05-4.78-4.65-4.96zM14 13v4h-4v-4H7l5-5 5 5h-3z" /></UploadIcon>
              <FieldText>
                <FieldLabel>.pdb file</FieldLabel>
                <FieldValue>receptor.pdb</FieldValue>
              </FieldText>
              <CloseIcon viewBox="0 0 24 24"><path d="M19 6.41L17.59 5 12 10.59 6.41 5 5 6.41 10.59 12 5 17.59 6.41 19 12 13.41 17.59 19 19 17.59 13.41 12 19 6.41z" /></CloseIcon>
            </Field>
            <Helper><span>Upload .pdb file</span><span>1 (363.6KB)</span></Helper>
            <SectionText $mb={21}>Search space</SectionText>
            {fields.map(([label, value]) => (
              <Field key={label}>
                <FieldText>
                  <FieldLabel>{label}</FieldLabel>
                  <FieldValue>{value}</FieldValue>
                </FieldText>
              </Field>
            ))}
            <SectionText $mb={24} $mt={1}>Other parameters</SectionText>
            <SectionText $mb={20}>1 epoch training will take 20-30 min approx</SectionText>
            <Field $mb={0}>
              <FieldText>
                <FieldLabel>Epoch batch size</FieldLabel>
                <FieldValue>1</FieldValue>
              </FieldText>
              <Spinner><SpinArrow $up /><SpinArrow /></Spinner>
            </Field>
            <ScrollThumb />
          </Side>
        </Columns>
      </Main>
    </Page>
  );
}
